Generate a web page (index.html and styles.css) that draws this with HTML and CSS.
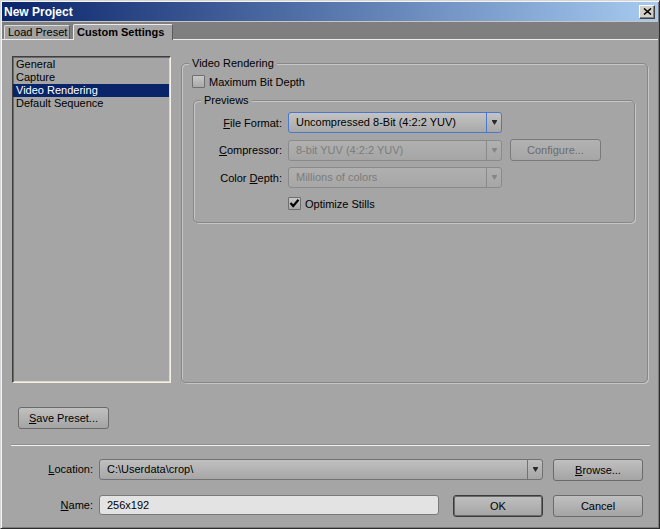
FILE: index.html
```html
<!DOCTYPE html>
<html>
	<head>
		<meta charset="UTF-8">
		<title>New Project</title>
		<link rel="stylesheet" href="styles.css">
	</head>
	<body>
		<div class="window">
			<div class="titlebar">
				<span class="title">New Project</span>
				<span class="close">
					<svg width="9" height="7" viewBox="0 0 9 7"><path d="M1 0.5 L8 6.5 M8 0.5 L1 6.5" stroke="#000" stroke-width="1.6" fill="none"/></svg>
				</span>
			</div>
			<div class="tabbar">
				<span class="tab">Load Preset</span>
				<span class="tab active">Custom Settings</span>
			</div>
			<div class="content">
				<div class="main">
					<ul class="list">
						<li>General</li>
						<li>Capture</li>
						<li class="selected">Video Rendering</li>
						<li>Default Sequence</li>
					</ul>
					<div class="group outer">
						<span class="legend">Video Rendering</span>
						<div class="check first">
							<span class="box"></span>
							<span>Maximum Bit Depth</span>
						</div>
						<div class="group inner">
							<span class="legend">Previews</span>
							<div class="row first">
								<span class="label"><u>F</u>ile Format:</span>
								<div class="combo focus">
									<span class="value">Uncompressed 8-Bit (4:2:2 YUV)</span>
									<span class="arrow"><svg width="5" height="5" viewBox="0 0 5 5"><polygon points="0,0 5,0 5,1 2.5,5 0,1" fill="#2a2a2a"/></svg></span>
								</div>
							</div>
							<div class="row">
								<span class="label"><u>C</u>ompressor:</span>
								<div class="combo disabled">
									<span class="value">8-bit YUV (4:2:2 YUV)</span>
									<span class="arrow"><svg width="5" height="5" viewBox="0 0 5 5"><polygon points="0,0 5,0 5,1 2.5,5 0,1" fill="#858585"/></svg></span>
								</div>
								<span class="btn disabled">Confi<u>g</u>ure...</span>
							</div>
							<div class="row">
								<span class="label">Color <u>D</u>epth:</span>
								<div class="combo disabled">
									<span class="value">Millions of colors</span>
									<span class="arrow"><svg width="5" height="5" viewBox="0 0 5 5"><polygon points="0,0 5,0 5,1 2.5,5 0,1" fill="#858585"/></svg></span>
								</div>
							</div>
							<div class="check stills">
								<span class="box">
									<svg width="11" height="11" viewBox="0 0 11 11"><path d="M1.5 5 L4.2 8 L9.5 1.8" stroke="#000" stroke-width="2.2" fill="none"/></svg>
								</span>
								<span>Optimize Stills</span>
							</div>
						</div>
					</div>
				</div>
				<div class="save-row">
					<span class="btn save"><u>S</u>ave Preset...</span>
				</div>
				<div class="sep"></div>
				<div class="field-row">
					<span class="flabel"><u>L</u>ocation:</span>
					<div class="combo location">
						<span class="value">C:\Userdata\crop\</span>
						<span class="arrow"><svg width="5" height="5" viewBox="0 0 5 5"><polygon points="0,0 5,0 5,1 2.5,5 0,1" fill="#2a2a2a"/></svg></span>
					</div>
					<span class="btn wide"><u>B</u>rowse...</span>
				</div>
				<div class="field-row second">
					<span class="flabel"><u>N</u>ame:</span>
					<span class="input">256x192</span>
					<span class="btn wide default">OK</span>
					<span class="btn wide">Cancel</span>
				</div>
			</div>
		</div>
	</body>
</html>
```

FILE: styles.css
```css
body,ul{
	margin: 0;
	padding: 0;
}
body{
	background-color: #a5a5a5;
	font-family: "Liberation Sans", Arial, sans-serif;
	font-size: 11px;
	color: #000;
}
u{
	text-decoration: underline;
	text-underline-offset: 1px;
}

.window{
	width: 660px;
	height: 529px;
	box-sizing: border-box;
	border: 1px solid;
	border-color: #d6d6d6 #2c2c2c #2c2c2c #d6d6d6;
	padding: 1px;
	box-shadow: inset 1px 1px 0 #f4f4f4, inset -1px -1px 0 #7c7c7c;
	background-color: #a5a5a5;
	display: flex;
	flex-direction: column;
}

/* title */
.titlebar{
	height: 19px;
	flex-shrink: 0;
	display: flex;
	align-items: center;
	justify-content: space-between;
	padding: 0 3px 0 2px;
	background: linear-gradient(to right, #0a246a, #a6caf0);
}
.title{
	color: #fff;
	font-weight: bold;
	font-size: 12px;
}
.close{
	width: 16px;
	height: 14px;
	box-sizing: border-box;
	display: flex;
	align-items: center;
	justify-content: center;
	background-color: #d4d0c8;
	border: 1px solid;
	border-color: #fff #404040 #404040 #fff;
	box-shadow: inset -1px -1px 0 #808080;
}

/* tabs */
.tabbar{
	height: 17px;
	flex-shrink: 0;
	display: flex;
	align-items: flex-end;
	gap: 3px;
	padding-left: 2px;
	background-color: #7f7f7f;
	border-top: 1px solid #c6c6c6;
	border-bottom: 1px solid #ececec;
}
.tab{
	width: 66px;
	height: 14px;
	box-sizing: border-box;
	padding-left: 3px;
	line-height: 13px;
	background-color: #a2a2a2;
	border-top: 1px solid #dcdcdc;
	border-left: 1px solid #dcdcdc;
	border-right: 1px solid #5c5c5c;
	border-radius: 2px 2px 0 0;
	white-space: nowrap;
}
.tab.active{
	width: 100px;
	height: 16px;
	margin-bottom: -1px;
	line-height: 14px;
	font-weight: bold;
	background-color: #a5a5a5;
	border-top-color: #ececec;
	border-left-color: #ececec;
}

.content{
	flex: 1;
	padding: 16px 10px 0 10px;
}
.main{
	height: 327px;
	display: flex;
	gap: 10px;
}

/* list */
.list{
	width: 159px;
	flex-shrink: 0;
	box-sizing: border-box;
	list-style: none;
	padding-top: 1px;
	border: 1px solid;
	border-color: #3e3e3e #f4f0e6 #f4f0e6 #3e3e3e;
	box-shadow: inset 1px 1px 0 #6a6a6a, inset -1px -1px 0 #dcd8cc;
}
.list li{
	line-height: 13px;
	padding-left: 3px;
	margin-right: 1px;
	white-space: nowrap;
}
.list .selected{
	background-color: #0a246a;
	color: #fff;
}

/* groups */
.group{
	border: 1px solid #878787;
	border-radius: 5px;
	box-shadow: inset 1px 1px 0 #c6c6c6, 1px 1px 0 #c6c6c6;
	display: flex;
	flex-direction: column;
	align-items: flex-start;
}
.legend{
	margin: -7px 0 0 -3px;
	padding: 0 3px;
	line-height: 13px;
	background-color: #a5a5a5;
}
.outer{
	flex: 1;
	margin-top: 7px;
	padding: 0 12px 0 10px;
}
.inner{
	align-self: stretch;
	margin: 12px 0 0 1px;
	padding: 0 10px 12px 10px;
}

.check{
	display: flex;
	align-items: center;
	gap: 4px;
	height: 13px;
}
.check.first{
	margin-top: 5px;
}
.check.stills{
	margin: 9px 0 0 84px;
}
.box{
	width: 13px;
	height: 13px;
	box-sizing: border-box;
	display: flex;
	align-items: center;
	justify-content: center;
	border: 1px solid #6e6e6e;
	border-radius: 1px;
	background: linear-gradient(#c8c8c8, #a9a9a9);
}

.row{
	display: flex;
	align-items: center;
	gap: 6px;
	margin-top: 6px;
}
.row.first{
	margin-top: 5px;
}
.label{
	width: 78px;
	text-align: right;
	white-space: nowrap;
}
.row .btn{
	margin-left: 2px;
}

/* combos */
.combo{
	width: 214px;
	height: 21px;
	box-sizing: border-box;
	display: flex;
	border: 1px solid #727272;
	border-radius: 3px;
	background: linear-gradient(#c4c4c4, #a8a8a8);
}
.combo .value{
	flex: 1;
	padding-left: 7px;
	line-height: 19px;
	white-space: nowrap;
}
.combo .arrow{
	width: 14px;
	display: flex;
	align-items: center;
	justify-content: center;
	border-left: 1px solid #727272;
}
.combo.focus{
	border-color: #4a78cc;
}
.combo.focus .arrow{
	border-left-color: #4a78cc;
}
.combo.disabled{
	border-color: #8a8a8a;
	background: linear-gradient(#b0b0b0, #a6a6a6);
	color: #7c7c7c;
}
.combo.disabled .arrow{
	border-left-color: #8a8a8a;
}

/* buttons */
.btn{
	width: 91px;
	height: 22px;
	box-sizing: border-box;
	display: flex;
	align-items: center;
	justify-content: center;
	border: 1px solid #6a6a6a;
	border-radius: 3px;
	background: linear-gradient(#c0c0c0, #a4a4a4);
	white-space: nowrap;
}
.btn.disabled{
	border-color: #7a7a7a;
	background: linear-gradient(#b2b2b2, #a6a6a6);
	color: #6c6c6c;
}
.btn.wide{
	width: 90px;
}
.btn.default{
	border-color: #3a3a3a;
	box-shadow: inset 0 0 0 1px #6a6a6a;
}

.save-row{
	margin-top: 24px;
	padding-left: 6px;
	display: flex;
}
.sep{
	margin: 15px -2px 0 -1px;
	border-top: 1px solid #8e8e8e;
	border-bottom: 1px solid #f0f0f0;
}

.field-row{
	display: flex;
	align-items: flex-start;
	margin-top: 13px;
}
.field-row.second{
	margin-top: 14px;
}
.flabel{
	width: 81px;
	margin-right: 6px;
	line-height: 21px;
	text-align: right;
}
.combo.location{
	width: 444px;
	margin-right: 10px;
	background: linear-gradient(#c0c0c0, #a6a6a6);
}
.input{
	width: 340px;
	height: 20px;
	box-sizing: border-box;
	margin-right: 14px;
	padding-left: 7px;
	line-height: 18px;
	border: 1px solid #7a7a7a;
	border-radius: 3px;
	background-color: #e3e3e3;
}
.field-row.second .default{
	margin-right: 10px;
}
```
